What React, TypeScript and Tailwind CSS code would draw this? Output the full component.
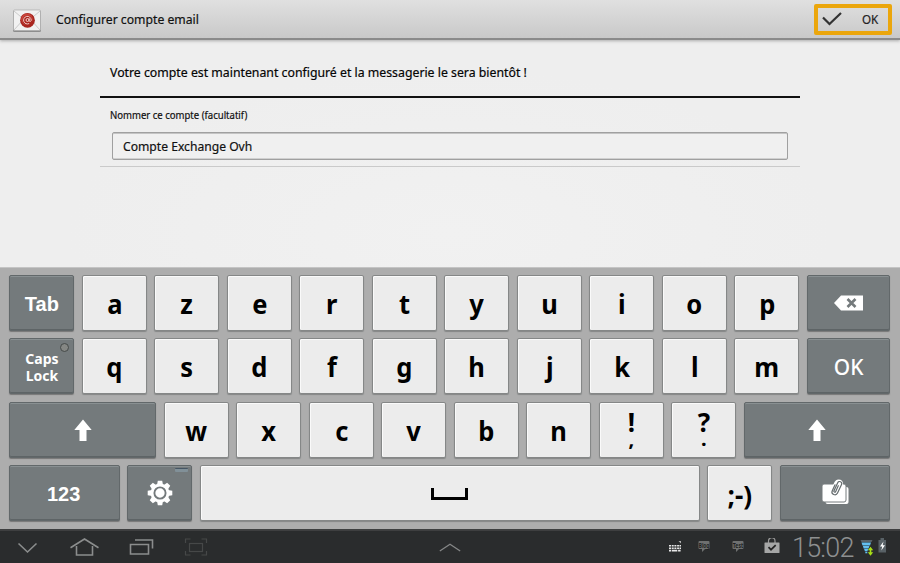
import type { ReactNode } from "react";

const LIGHT =
  "bg-[#ececec] text-black border-[#858787] shadow-[inset_1px_1px_0_#fafafa,0_1px_1px_#858787]";
const DARK =
  "bg-[#747a7c] text-white border-[#62686a] shadow-[inset_0_1px_0_#899092,inset_0_-1px_0_#5e6466,0_1px_1px_#777]";

function Key({ children, width = "w-[65px]", dark = false }: { children?: ReactNode; width?: string; dark?: boolean }) {
  return (
    <div
      className={`${width} ${dark ? DARK : LIGHT} relative flex h-[56px] shrink-0 items-center justify-center rounded-[2px] border`}
    >
      {children}
    </div>
  );
}

function Letter({ children }: { children: string }) {
  return (
    <Key>
      <span className="mt-[2px] scale-x-[0.98] text-[26px] leading-none font-bold">{children}</span>
    </Key>
  );
}

function Punct({ top, bottom }: { top: string; bottom: string }) {
  return (
    <Key>
      <div className="flex flex-col items-center font-bold">
        <span className="h-[29px] text-[26px] leading-[32px]">{top}</span>
        <span className="h-[19px] text-[20px] leading-[8px]">{bottom}</span>
      </div>
    </Key>
  );
}

function Shift({ width }: { width: string }) {
  return (
    <Key dark width={width}>
      <svg className="h-[22px] w-[18px]" viewBox="0 0 18 22" fill="#fff">
        <path d="M9 0.5 17.7 11H12.5V22H5.5V11H0.3Z" />
      </svg>
    </Key>
  );
}

function MailIcon() {
  return (
    <svg className="mt-[3px] h-[24px] w-[30px]" viewBox="0 0 30 24">
      <rect x="1" y="1.5" width="28" height="21.5" rx="1.5" fill="#8d8d8d" />
      <rect x="1.5" y="1" width="27" height="20.5" rx="1" fill="#f1f1f1" stroke="#a9a9a9" strokeWidth=".7" />
      <path d="M2 2 15 13 28 2M2 21 11 11M28 21 19 11" fill="none" stroke="#c4c4c4" strokeWidth=".9" />
      <circle cx="15.5" cy="11.3" r="7.4" fill="#a82620" />
      <circle cx="15" cy="10.3" r="5.8" fill="#c8453c" />
      <circle cx="15.5" cy="11.3" r="4.9" fill="#ab241e" />
      <circle cx="15.5" cy="11" r="1.5" fill="none" stroke="#f3d2cd" strokeWidth="1" />
      <path d="M17.2 9.3v2.4c0 1.3 2 1.2 2-.7a3.8 3.8 0 1 0-2 3.5" fill="none" stroke="#f3d2cd" strokeWidth="1" />
    </svg>
  );
}

function Gear() {
  return (
    <svg className="h-[26px] w-[26px]" viewBox="-13 -13 26 26">
      <g fill="#fff">
        {[0, 45, 90, 135].map((a) => (
          <path key={a} d="M-2.2-12.3h4.4L3-8V8l-.8 4.3h-4.4L-3 8V-8Z" transform={`rotate(${a})`} />
        ))}
        <circle r="9.4" />
      </g>
      <circle r="5.6" fill="#fff" stroke="#747a7c" strokeWidth="1.9" />
    </svg>
  );
}

function Clipboard() {
  return (
    <svg className="mb-[2px] h-[26px] w-[28px]" viewBox="0 0 28 26">
      <rect x="4.5" y="8" width="23" height="17" rx="2" fill="#fff" />
      <rect x="1" y="5" width="24" height="18" rx="2" fill="#fff" stroke="#747a7c" />
      <g transform="translate(15.8 8.8) rotate(25)" fill="none" strokeLinecap="round">
        <rect x="-3.7" y="-8" width="7.4" height="16" rx="3.7" fill="#fff" stroke="#fff" strokeWidth="1.6" />
        <path d="M-2.9-2V4.5a2.9 2.9 0 0 0 5.8 0V-5a2.1 2.1 0 0 0-4.2 0V4a.9.9 0 0 0 1.8 0V-2.5" stroke="#656c6e" strokeWidth="1.2" />
      </g>
    </svg>
  );
}

function Chat({ text }: { text: string }) {
  return (
    <svg className="h-[13px] w-[12px]" viewBox="0 0 12 13">
      <path d="M1.5 1h9a1 1 0 0 1 1 1v6a1 1 0 0 1-1 1H7l-3 3V9H1.5a1 1 0 0 1-1-1V2a1 1 0 0 1 1-1Z" fill="#6e7070" />
      <text x="6" y="7.6" textAnchor="middle" fontSize="7" fontWeight="700" textLength="10.5" lengthAdjust="spacingAndGlyphs" fill="#1d1f20">
        {text}
      </text>
    </svg>
  );
}

function Header() {
  return (
    <header className="flex h-[40px] items-center border-b-2 border-[#8b8b8b] bg-linear-to-b from-[#e0e0e0] to-[#c9c9c9] pr-[8px] pl-[12px] shadow-[0_1px_3px_#aaa]">
      <MailIcon />
      <h1 className="mt-[2px] ml-[14px] origin-left scale-x-[0.938] text-[13px] font-[450] whitespace-nowrap text-[#111] [-webkit-text-stroke:0.2px_#111]">
        Configurer compte email
      </h1>
      <button className="ml-auto flex h-[31px] w-[78px] items-center rounded-[2px] border-[4.5px] border-[#eba60c] pl-[4px]">
        <svg className="h-[14px] w-[20px]" viewBox="0 0 20 14" fill="none" stroke="#333" strokeWidth="2.2">
          <path d="M1 5.5 7.5 12 19 1" />
        </svg>
        <span className="mt-[3px] ml-[20px] origin-left scale-x-[0.93] text-[12.5px] font-[450] text-[#222] [-webkit-text-stroke:0.2px_#222]">
          OK
        </span>
      </button>
    </header>
  );
}

function Account() {
  return (
    <main className="h-[227px] bg-[#eeeeee] bg-[radial-gradient(ellipse_at_50%_85%,#f1f1f1,#eeeeee_60%)] px-[100px] [-webkit-text-stroke:0.2px_#111]">
      <p className="flex h-[58px] items-center border-b-2 border-[#111] pt-[11px] pl-[9.5px] text-[12.5px] font-[450] whitespace-nowrap text-black">
        <span className="origin-left scale-x-[0.983]">
          Votre compte est maintenant configuré et la messagerie le sera bientôt !
        </span>
      </p>
      <div className="h-[69px] border-b border-[#cacaca] pt-[10px]">
        <label className="block h-[14px] pl-[9.5px] text-[10px] leading-[14px] font-[450] text-[#111]">
          <span className="inline-block origin-left scale-x-[0.955]">Nommer ce compte (facultatif)</span>
        </label>
        <div className="mt-[10px] mr-[12px] ml-[12px] flex h-[28px] items-center rounded-[2px] border-[1.5px] border-[#a0a0a0] bg-[#f0f0f0] pt-[2px] pl-[10px] text-[12.5px] font-[450] text-[#111] shadow-[inset_0_1px_0_#c4c4c4,inset_0_-1px_0_#d0d0d0]">
          <span className="origin-left scale-x-[0.97] whitespace-nowrap">Compte Exchange Ovh</span>
        </div>
      </div>
    </main>
  );
}

function Keyboard() {
  const row = "flex gap-[7.5px]";
  return (
    <section className="flex h-[262px] flex-col gap-[7.4px] border-t border-[#c4c4c4] bg-[#adadad] pt-[7px] pl-[9.4px]">
      <div className={row}>
        <Key dark>
          <span className="mt-[1px] text-[20px] font-bold font-['Liberation_Sans',sans-serif]">Tab</span>
        </Key>
        {[..."azertyuiop"].map((c) => (
          <Letter key={c}>{c}</Letter>
        ))}
        <Key dark width="w-[83.5px]">
          <svg className="h-[16px] w-[29px]" viewBox="0 0 29 16">
            <path d="M0 8 7 .5H29V15.5H7Z" fill="#fff" />
            <path d="m13.5 4 8 8m0-8-8 8" stroke="#747a7c" strokeWidth="2.6" />
          </svg>
        </Key>
      </div>
      <div className={row}>
        <Key dark>
          <div className="mt-[2px] flex flex-col items-center text-[14px] leading-[17px] font-bold">
            <span>Caps</span>
            <span>Lock</span>
          </div>
          <i className="absolute top-[4px] right-[4px] h-[9px] w-[9px] rounded-full border border-[#454a49] bg-[#858784]" />
        </Key>
        {[..."qsdfghjklm"].map((c) => (
          <Letter key={c}>{c}</Letter>
        ))}
        <Key dark width="w-[83.5px]">
          <span className="scale-x-[0.95] text-[22px] leading-none font-medium">OK</span>
        </Key>
      </div>
      <div className={row}>
        <Shift width="w-[147px]" />
        {[..."wxcvbn"].map((c) => (
          <Letter key={c}>{c}</Letter>
        ))}
        <Punct top="!" bottom="," />
        <Punct top="?" bottom="." />
        <Shift width="w-[146px]" />
      </div>
      <div className={row}>
        <Key dark width="w-[110.5px]">
          <span className="mt-[1px] mr-[2px] text-[20px] font-bold font-['Liberation_Sans',sans-serif]">123</span>
        </Key>
        <Key dark>
          <Gear />
          <i className="absolute top-[2px] right-[3px] h-[4px] w-[13px] rounded-[1px] border-t border-[#465664] bg-[#819098]" />
        </Key>
        <Key width="w-[500px]">
          <div className="mt-[1px] h-[12px] w-[37px] border-x-[3px] border-b-[3px] border-black" />
        </Key>
        <Key>
          <span className="mt-[3px] text-[26px] leading-none font-bold">;-)</span>
        </Key>
        <Key dark width="w-[110.5px]">
          <Clipboard />
        </Key>
      </div>
    </section>
  );
}

function SystemBar() {
  return (
    <footer className="flex h-[34px] items-center border-t-2 border-[#3e3f40] bg-[#2a2c2d] pb-[1px] pl-[17px]">
      <svg className="h-[22px] w-[200px]" viewBox="17 536 200 22" fill="none" stroke="#8b8d8d" strokeWidth="1.6">
        <path d="m18.5 543.5 9 8.5 9-8.5" />
        <path d="m70.5 547.8 14-8.8 14 8.8M76.5 546v9h16v-9" />
        <path d="M130.5 544.5h18v9.5h-18ZM135 540h17.5v8.5" />
        <g stroke="#464848" strokeWidth="1.2">
          <rect x="189.5" y="543.5" width="13" height="8" />
          <path d="M185.5 543v-4h5M201.5 539h5v4M206.5 551v4h-5M190.5 555h-5v-4" />
        </g>
      </svg>
      <svg className="ml-[222px] h-[10px] w-[22px]" viewBox="0 0 22 10" fill="none" stroke="#858787" strokeWidth="1.3">
        <path d="M.8 9 11 2.2 21.2 9" />
      </svg>
      <svg className="ml-[207px] h-[12px] w-[14px]" viewBox="0 0 14 12">
        <path
          d="M1 4h2v1.6H1Zm2.7 0h2v1.6h-2Zm2.7 0h2v1.6h-2Zm2.7 0h2v1.6h-2ZM11.6 4H13v1.6h-1.4ZM1 6.4h2V8H1Zm2.7 0h2V8h-2Zm2.7 0h2V8h-2Zm2.7 0h2V8h-2Zm2.5 0H13V8h-1.4ZM1 8.8h2v1.8H1Zm2.7 0h5.6v1.8H3.7Zm6.4 0h2.5v1.8h-2.5Z"
          fill="#e8e8e8"
        />
        <path d="M10.5 0H13v2.5Z" fill="#b5b5b5" />
      </svg>
      <div className="ml-[16px]">
        <Chat text="Blog" />
      </div>
      <div className="ml-[22px]">
        <Chat text="Test" />
      </div>
      <svg className="mb-[1px] ml-[20px] h-[16px] w-[16px]" viewBox="0 0 16 16">
        <path d="M4.5 5V3a3 3 0 0 1 6.5 0v2" fill="none" stroke="#999" strokeWidth="1.2" />
        <rect x=".5" y="4.5" width="15" height="10.5" rx=".5" fill="#a5a6a6" />
        <path d="m4.5 9.2 2.5 2.5 4.7-4.5" fill="none" stroke="#222" strokeWidth="1.7" />
      </svg>
      <span className="mt-[3px] ml-[12px] w-[64px] origin-left font-[Roboto,sans-serif] text-[27px] leading-none font-light tracking-[-0.8px] text-[#8e9090]">
        15:02
      </span>
      <svg className="ml-[4px] h-[18px] w-[14px]" viewBox="0 0 14 18">
        <path d="M.5 2H12.5L11.5 4h-10Z" fill="#59636a" />
        <path d="M1.5 4.6h9.5l-1 2.8H2.5ZM2.9 8h6.5l-.8 2.4H3.7ZM4.1 11h4l-.7 2.2H4.9Z" fill="#62bff0" />
        <path d="M5.3 13.8h2v1.5h-2Z" fill="#62bff0" />
        <path d="m10.5 8.8 2.7 3.4H7.8Zm0 9L7.8 14.2h5.4ZM9.7 12h1.6v3H9.7Z" fill="#a8df16" />
      </svg>
      <svg className="mb-[1px] ml-[4px] h-[16px] w-[9px]" viewBox="0 0 9 16">
        <path d="M2.5 0h3.5v2H8v12.5H.5V2h2Z" fill="#586166" />
        <path d="M5.5 3.5 2 8.5h2.3L3.3 12.5 7 7.3H4.7Z" fill="#fff" />
      </svg>
    </footer>
  );
}

export default function App() {
  return (
    <div className="h-[563px] w-[900px] overflow-hidden bg-[#eee] font-['Noto_Sans','Open_Sans',sans-serif]">
      <div className="relative z-10">
        <Header />
      </div>
      <Account />
      <Keyboard />
      <SystemBar />
    </div>
  );
}
